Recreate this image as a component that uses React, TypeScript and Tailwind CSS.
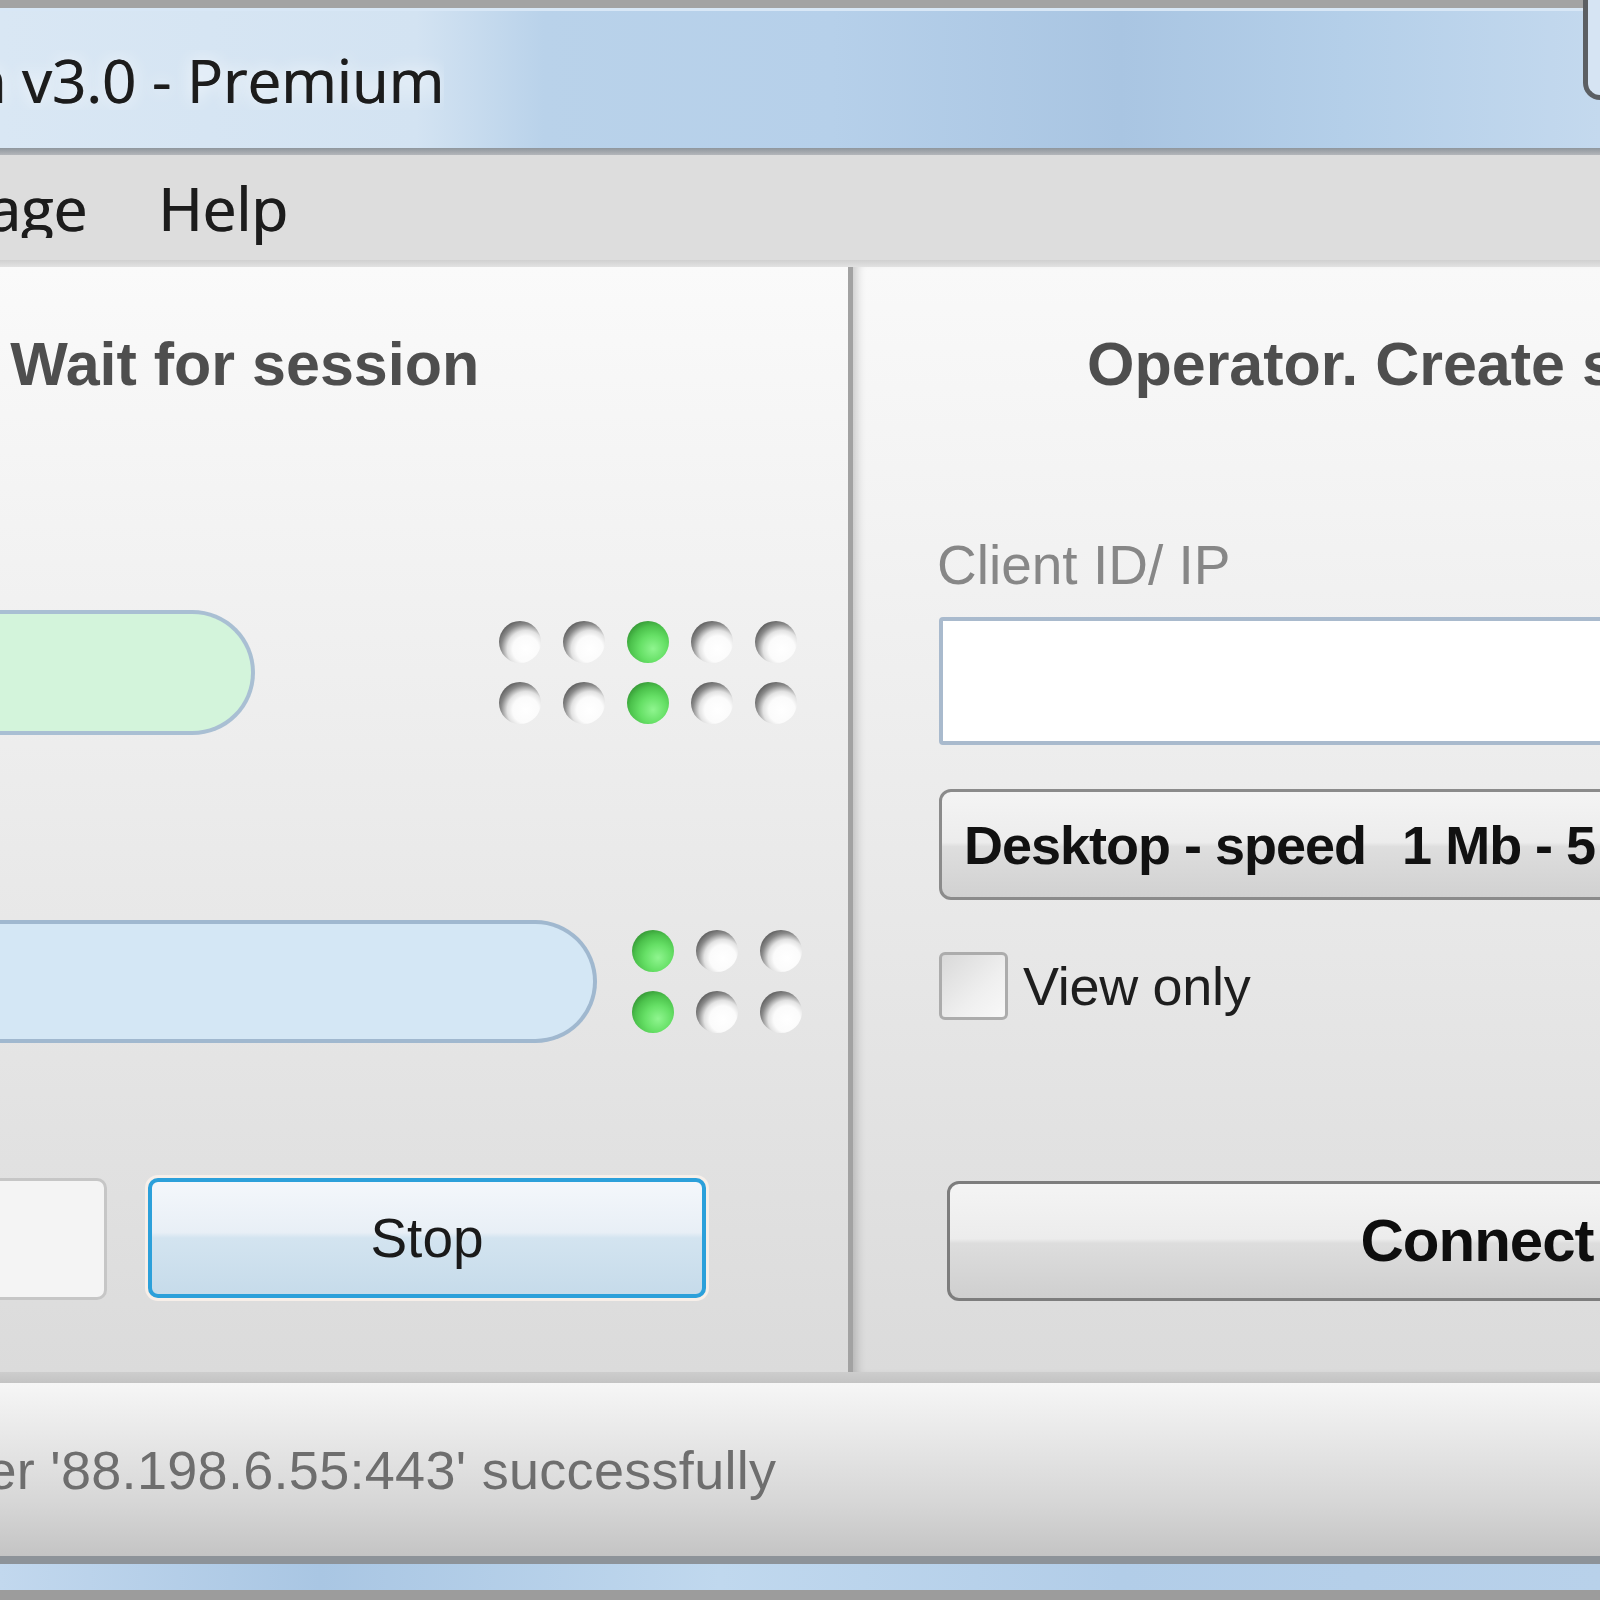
import React from "react";

function Dot({ on }: { on: boolean }) {
  return on ? (
    <div className="w-[42px] h-[42px] rounded-full bg-[radial-gradient(circle_at_62%_66%,#8ff58f_0%,#66e066_35%,#4cc24c_60%,#2e8a2e_85%,#3f9a3f_100%)]" />
  ) : (
    <div className="w-[42px] h-[42px] rounded-full bg-[radial-gradient(circle_at_64%_67%,#ffffff_0%,#fbfbfb_34%,#e2e2e2_48%,#8a8a8a_64%,#5e5e5e_78%,#8c8c8c_100%)]" />
  );
}

function DotGrid({ cols, active }: { cols: number; active: number }) {
  const rows = [0, 1];
  const c = Array.from({ length: cols }, (_, i) => i);
  return (
    <div className="flex flex-col gap-[19px]">
      {rows.map((r) => (
        <div key={r} className="flex gap-[22px]">
          {c.map((i) => (
            <Dot key={i} on={i === active} />
          ))}
        </div>
      ))}
    </div>
  );
}

export default function App() {
  return (
    <div className="w-[1600px] h-[1600px] overflow-hidden flex flex-col bg-[#dcdcdc] font-['Liberation_Sans',Arial,sans-serif]">
      {/* Title bar */}
      <div className="relative shrink-0">
        <div className="h-[8px] bg-[#a3a3a3]" />
        <div className="h-[140px] flex items-center border-t-[3px] border-[#d8e7f6] bg-[linear-gradient(90deg,#d9e7f4_0%,#d3e3f2_26%,#b9d2ea_34%,#b6d0ea_52%,#a9c5e2_70%,#b4cfe9_84%,#c4d9ee_100%)]">
          <div className="w-[444px] flex justify-end overflow-hidden whitespace-nowrap font-['Open_Sans',sans-serif] text-[60px] leading-none text-[#1c1c1c] [text-shadow:0.7px_0_0_#2a2a2a,0_0_18px_#ffffff]">
            Ammyy Admin v3.0 - Premium
          </div>
        </div>
        <div className="absolute right-0 top-0 w-[17px] h-[100px] border-l-[5px] border-b-[5px] border-[#5c5f63] rounded-bl-[22px] bg-[#d6e4f3]" />
      </div>
      <div className="h-[7px] shrink-0 bg-[linear-gradient(180deg,#8f969d,#b3b6ba)]" />

      {/* Menu */}
      <div className="h-[105px] shrink-0 flex items-center bg-[#dddddd] font-['Open_Sans',sans-serif] text-[60px] leading-none text-[#1c1c1c] [text-shadow:0.9px_0_0_#1c1c1c]">
        <div className="w-[87px] flex justify-end overflow-hidden whitespace-nowrap">
          <div className="flex gap-[71px] shrink-0">
            <span>Ammyy</span>
            <span>Language</span>
          </div>
        </div>
        <span className="ml-[71px]">Help</span>
      </div>
      <div className="h-[7px] shrink-0 bg-[linear-gradient(180deg,#d0d0d0,#e2e2e2)]" />

      {/* Content */}
      <div className="h-[1105px] shrink-0 flex">
        {/* Left panel */}
        <div className="w-[848px] shrink-0 overflow-hidden flex flex-col bg-[linear-gradient(180deg,#fafafa_0%,#eeeeee_40%,#dbdbdb_100%)]">
          <div className="pt-[67px] ml-[-193px] whitespace-nowrap font-bold text-[61px] leading-none text-[#4e4e4e]">
            Client. Wait for session
          </div>
          <div className="mt-[215px] flex items-center">
            <div className="w-[255px] h-[125px] shrink-0 rounded-r-full border-y-[4px] border-r-[4px] border-[#a9bfd3] bg-[#d3f4db]" />
            <div className="ml-[244px]">
              <DotGrid cols={5} active={2} />
            </div>
          </div>
          <div className="mt-[185px] flex items-center">
            <div className="w-[597px] h-[123px] shrink-0 rounded-r-full border-y-[4px] border-r-[4px] border-[#a0b8cf] bg-[#d4e7f5]" />
            <div className="ml-[35px]">
              <DotGrid cols={3} active={0} />
            </div>
          </div>
          <div className="mt-[135px] flex">
            <div className="w-[558px] h-[122px] shrink-0 ml-[-451px] rounded-[10px] border-[3px] border-[#c6c6c6] bg-[#f4f4f4] flex items-center justify-center text-[55px] text-[#a0a0a0]">
              Start
            </div>
            <div className="w-[558px] h-[120px] shrink-0 ml-[41px] rounded-[10px] border-[4px] border-[#2ca0da] bg-[linear-gradient(180deg,#f4f7fb_0%,#e8eff6_45%,#d3e4f0_50%,#c6dbea_100%)] shadow-[0_0_0_3px_#f7efe9] flex items-center justify-center text-[55px] leading-none text-[#1a1a1a]">
              Stop
            </div>
          </div>
        </div>

        {/* Separator */}
        <div className="w-[5px] shrink-0 bg-[#a2a2a2]" />

        {/* Right panel */}
        <div className="flex-1 overflow-hidden flex flex-col bg-[linear-gradient(180deg,#f9f9f9_0%,#eeeeee_40%,#dbdbdb_100%)] shadow-[inset_10px_0_10px_-6px_rgba(0,0,0,0.18)]">
          <div className="pt-[67px] ml-[234px] whitespace-nowrap font-bold text-[61px] leading-none text-[#4e4e4e]">
            Operator. Create session
          </div>
          <div className="mt-[143px] ml-[84px] whitespace-nowrap text-[55px] leading-none text-[#878787]">
            Client ID/ IP
          </div>
          <div className="mt-[24px] ml-[86px] w-[800px] h-[128px] shrink-0 rounded-[4px] border-[4px] border-[#a9bacd] bg-white" />
          <div className="mt-[44px] ml-[86px] w-[900px] h-[111px] shrink-0 rounded-[12px] border-[3px] border-[#8b8b8b] bg-[linear-gradient(180deg,#f4f4f4_0%,#ececec_48%,#dedede_52%,#d1d1d1_100%)] flex items-center pl-[22px] whitespace-nowrap font-bold text-[54px] tracking-[-1px] leading-none text-[#111111]">
            <span>Desktop - speed</span>
            <span className="ml-[36px]">1 Mb - 5 Mb</span>
          </div>
          <div className="mt-[52px] ml-[86px] flex items-center">
            <div className="w-[69px] h-[68px] shrink-0 rounded-[6px] border-[3px] border-[#acacac] bg-[linear-gradient(135deg,#d9d9d9_0%,#efefef_60%,#f8f8f8_100%)]" />
            <span className="ml-[15px] whitespace-nowrap text-[54px] leading-none text-[#1e1e1e] tracking-[-0.3px]">
              View only
            </span>
          </div>
          <div className="mt-[161px] ml-[94px] w-[1060px] h-[120px] shrink-0 rounded-[12px] border-[3px] border-[#7d7d7d] bg-[linear-gradient(180deg,#f4f4f4_0%,#ececec_48%,#dddddd_52%,#cfcfcf_100%)] flex items-center justify-center font-bold text-[60px] tracking-[-1px] leading-none text-[#0e0e0e]">
            Connect
          </div>
        </div>
      </div>

      {/* Status bar */}
      <div className="h-[11px] shrink-0 bg-[linear-gradient(180deg,#cdcdcd,#c3c3c3)]" />
      <div className="h-[173px] shrink-0 flex items-center overflow-hidden bg-[linear-gradient(180deg,#f6f6f6_0%,#e6e6e6_35%,#d6d6d6_70%,#c4c4c4_100%)]">
        <div className="ml-[-448px] whitespace-nowrap text-[54px] tracking-[0.3px] leading-none text-[#6e6e6e]">
          Connected to router '88.198.6.55:443' successfully
        </div>
      </div>
      <div className="h-[8px] shrink-0 bg-[#8d9399]" />
      <div className="h-[26px] shrink-0 bg-[linear-gradient(90deg,#c2d8ee_0%,#a9c6e3_20%,#c0d8ee_45%,#b2cde8_70%,#b8d1ea_100%)]" />
      <div className="flex-1 bg-[#9c9c9c]" />
    </div>
  );
}
